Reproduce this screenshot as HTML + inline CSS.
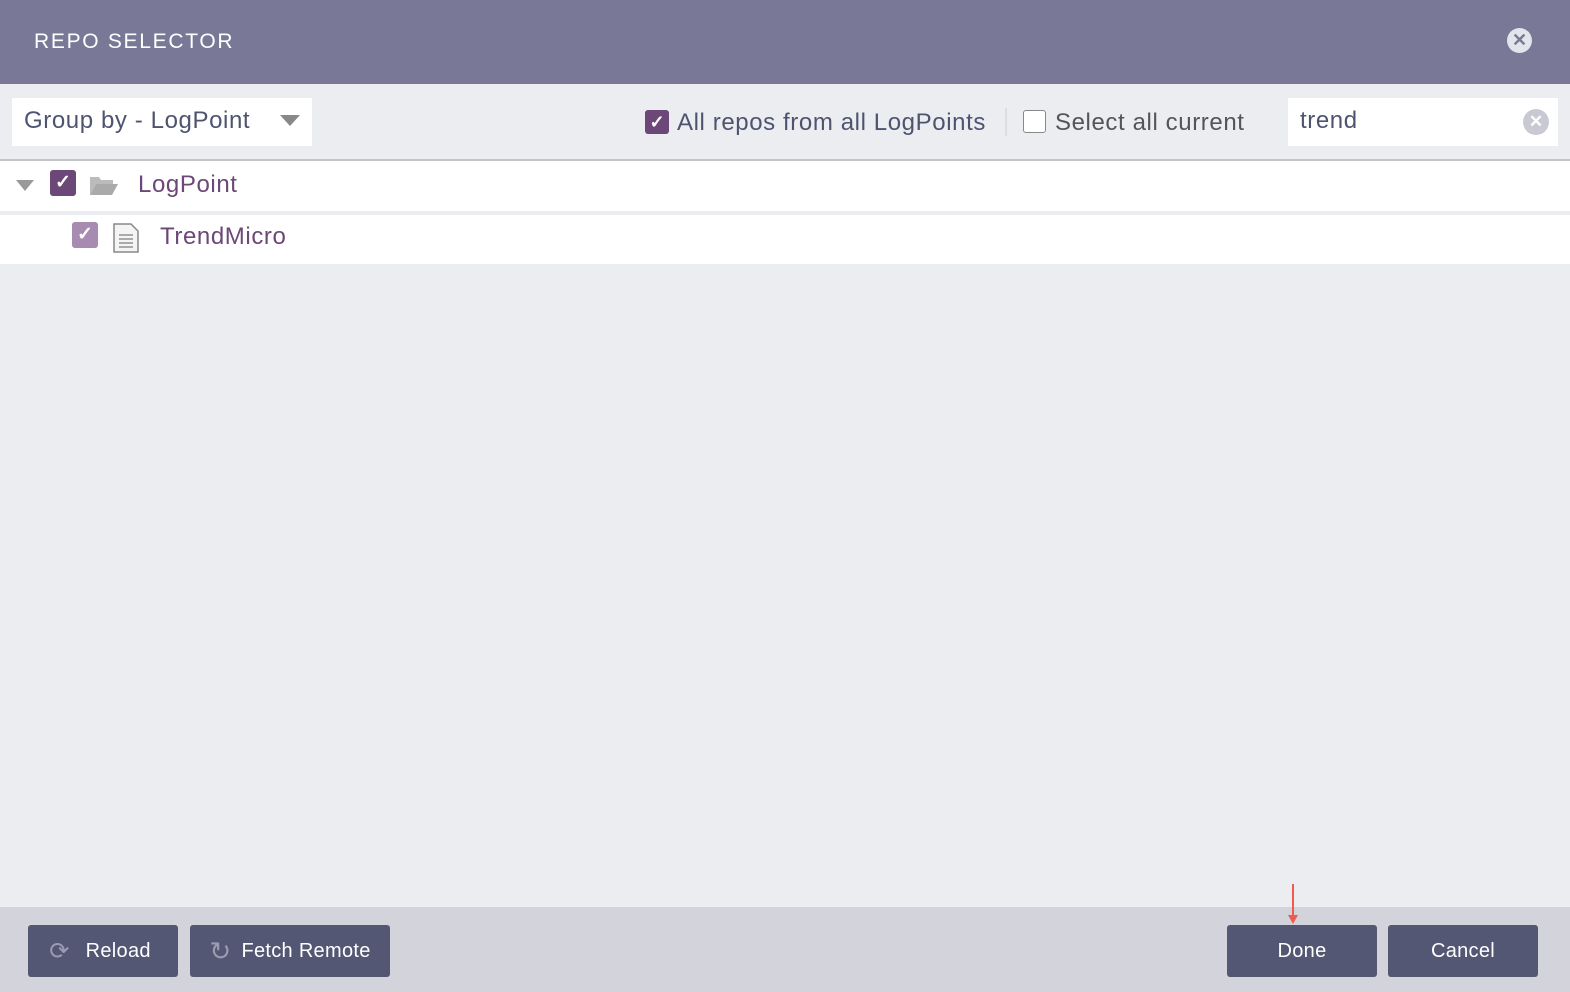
<!DOCTYPE html>
<html><head><style>
*{margin:0;padding:0;box-sizing:border-box}
body{width:1570px;height:992px;background:#ecedf1;font-family:"Liberation Sans",sans-serif;position:relative;overflow:hidden}
.a{position:absolute}
.hdr{left:0;top:0;width:1570px;height:84px;background:#797997}
.btn{background:#535774;border-radius:3px;color:#fff;font-size:20px;display:flex;align-items:center;justify-content:center;letter-spacing:0.3px}
.t{letter-spacing:0.6px}
</style></head><body>
<div class="a hdr"></div>
<div class="a" style="left:34px;top:30px;color:#fff;font-size:21px;letter-spacing:1.7px">REPO SELECTOR</div>
<div class="a" style="left:1507px;top:28px;width:25px;height:25px;border-radius:50%;background:#e4e4ec;color:#797997;font-size:18px;font-weight:bold;text-align:center;line-height:25px">✕</div>

<div class="a" style="left:12px;top:98px;width:300px;height:48px;background:#fff"></div>
<div class="a t" style="left:24px;top:107px;font-size:24px;color:#4e5470">Group by - LogPoint</div>
<div class="a" style="left:280px;top:115px;width:0;height:0;border-left:10px solid transparent;border-right:10px solid transparent;border-top:11px solid #888"></div>

<div class="a" style="left:645px;top:110px;width:24px;height:24px;background:#6b4877;border-radius:3px;color:#fff;font-size:18px;text-align:center;line-height:24px;font-weight:bold">✓</div>
<div class="a t" style="left:677px;top:109px;font-size:24px;color:#4e5470">All repos from all LogPoints</div>
<div class="a" style="left:1005px;top:108px;width:2px;height:28px;background:#dcdce2"></div>
<div class="a" style="left:1023px;top:110px;width:23px;height:23px;border:1.5px solid #888;border-radius:3px;background:#fff"></div>
<div class="a t" style="left:1055px;top:109px;font-size:24px;color:#555">Select all current</div>
<div class="a" style="left:1288px;top:98px;width:270px;height:48px;background:#fff"></div>
<div class="a t" style="left:1300px;top:107px;font-size:24px;color:#4e5470">trend</div>
<div class="a" style="left:1523px;top:109px;width:26px;height:26px;border-radius:50%;background:#c9c9d4;color:#fff;font-size:17px;font-weight:bold;text-align:center;line-height:26px">✕</div>

<div class="a" style="left:0;top:159px;width:1570px;height:2px;background:#c4c4c8"></div>
<div class="a" style="left:0;top:161px;width:1570px;height:50px;background:#fff"></div>
<div class="a" style="left:0;top:215px;width:1570px;height:49px;background:#fff"></div>
<div class="a" style="left:16px;top:180px;width:0;height:0;border-left:9px solid transparent;border-right:9px solid transparent;border-top:11px solid #999"></div>
<div class="a" style="left:50px;top:170px;width:26px;height:26px;background:#6b4877;border-radius:3px;color:#fff;font-size:19px;text-align:center;line-height:26px;font-weight:bold">✓</div>
<svg class="a" style="left:89px;top:174px" width="30" height="22"><path d="M1 3h9l2 3h12v4H7L1 21z" fill="#bbb"/><path d="M7 10h22l-6 11H1z" fill="#aaa"/></svg>
<div class="a t" style="left:138px;top:171px;font-size:24px;color:#6b4877">LogPoint</div>
<div class="a" style="left:72px;top:222px;width:26px;height:26px;background:#a88bb0;border-radius:3px;color:#fff;font-size:19px;text-align:center;line-height:26px;font-weight:bold">✓</div>
<svg class="a" style="left:112px;top:223px" width="28" height="30"><path d="M2 1h17l7 7v21H2z" fill="#f4f4f4" stroke="#888" stroke-width="1.5"/><path d="M7 12h14M7 16h14M7 20h14M7 24h14" stroke="#aaa" stroke-width="2"/></svg>
<div class="a t" style="left:160px;top:223px;font-size:24px;color:#6b4877">TrendMicro</div>

<div class="a" style="left:0;top:907px;width:1570px;height:85px;background:#d3d3db"></div>
<div class="a btn" style="left:28px;top:925px;width:150px;height:52px"><span style="color:#9a9cb0;font-size:24px;margin-right:16px;margin-left:-6px">⟳</span>Reload</div>
<div class="a btn" style="left:190px;top:925px;width:200px;height:52px"><span style="color:#9a9cb0;font-size:26px;margin-right:10px">↻</span>Fetch Remote</div>
<div class="a btn" style="left:1227px;top:925px;width:150px;height:52px">Done</div>
<div class="a btn" style="left:1388px;top:925px;width:150px;height:52px">Cancel</div>
<div class="a" style="left:1292px;top:884px;width:2px;height:34px;background:#f05a4f"></div>
<div class="a" style="left:1288px;top:915px;width:0;height:0;border-left:5px solid transparent;border-right:5px solid transparent;border-top:9px solid #f05a4f"></div>
</body></html>
